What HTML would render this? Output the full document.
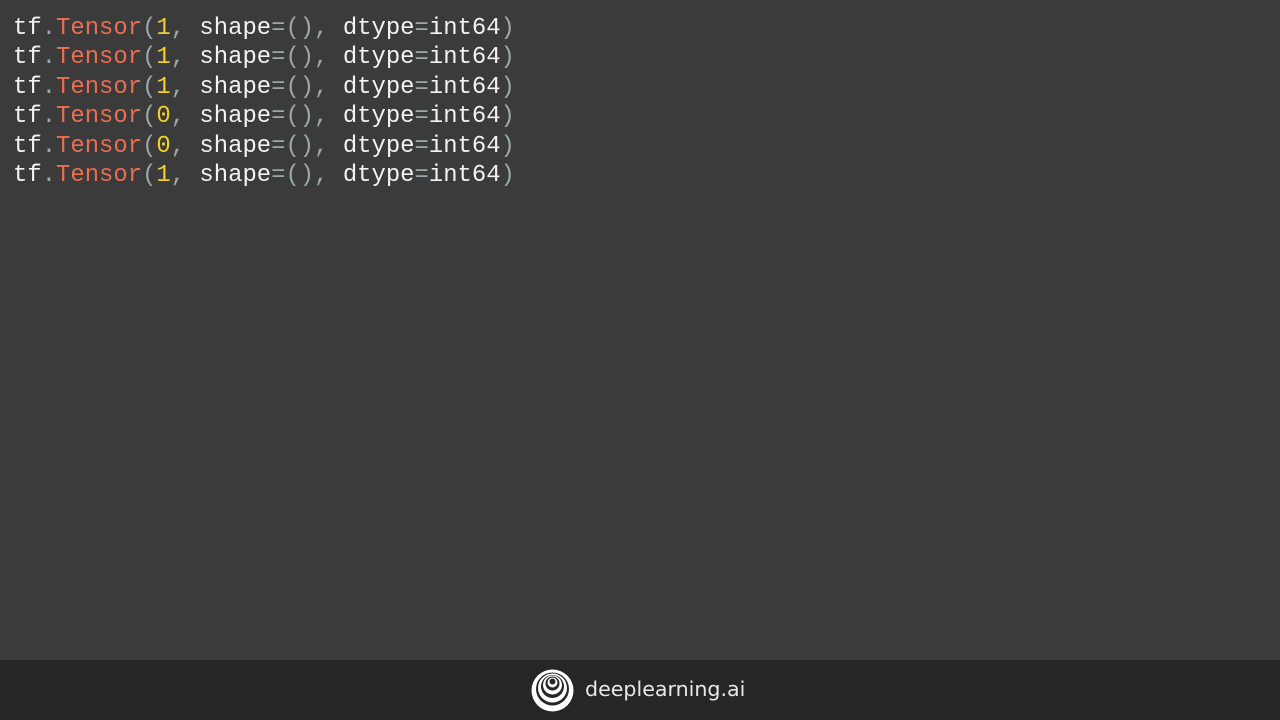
<!DOCTYPE html>
<html><head><style>
html,body{margin:0;padding:0;}
body{width:1280px;height:720px;background:#3b3b3b;position:relative;overflow:hidden;}
pre{position:absolute;left:13px;top:14px;margin:0;font-family:"Liberation Mono",monospace;font-size:23.9px;line-height:29.4px;color:#f2f2f2;}
.p{color:#9aa7ab}.c{color:#ea6e4f}.n{color:#f1cf2a}
.foot{position:absolute;left:0;top:660px;width:1280px;height:60px;background:#262626;}
.t{position:absolute;left:585px;top:677px;font-family:"DejaVu Sans","Liberation Sans",sans-serif;font-size:20.6px;color:#e8e8e8;}
</style></head><body>
<pre>tf<span class="p">.</span><span class="c">Tensor</span><span class="p">(</span><span class="n">1</span><span class="p">,</span> shape<span class="p">=(),</span> dtype<span class="p">=</span>int64<span class="p">)</span>
tf<span class="p">.</span><span class="c">Tensor</span><span class="p">(</span><span class="n">1</span><span class="p">,</span> shape<span class="p">=(),</span> dtype<span class="p">=</span>int64<span class="p">)</span>
tf<span class="p">.</span><span class="c">Tensor</span><span class="p">(</span><span class="n">1</span><span class="p">,</span> shape<span class="p">=(),</span> dtype<span class="p">=</span>int64<span class="p">)</span>
tf<span class="p">.</span><span class="c">Tensor</span><span class="p">(</span><span class="n">0</span><span class="p">,</span> shape<span class="p">=(),</span> dtype<span class="p">=</span>int64<span class="p">)</span>
tf<span class="p">.</span><span class="c">Tensor</span><span class="p">(</span><span class="n">0</span><span class="p">,</span> shape<span class="p">=(),</span> dtype<span class="p">=</span>int64<span class="p">)</span>
tf<span class="p">.</span><span class="c">Tensor</span><span class="p">(</span><span class="n">1</span><span class="p">,</span> shape<span class="p">=(),</span> dtype<span class="p">=</span>int64<span class="p">)</span></pre>
<div class="foot"></div>
<svg style="position:absolute;left:531px;top:669px" width="43" height="43" viewBox="0 0 43 43">
<circle cx="21.5" cy="21.5" r="21" fill="#fff"/>
<circle cx="21.5" cy="20" r="16.5" fill="#262626"/>
<circle cx="21.5" cy="19" r="14.5" fill="#fff"/>
<circle cx="21.5" cy="17.5" r="11.5" fill="#262626"/>
<circle cx="21.5" cy="16" r="9.5" fill="#fff"/>
<circle cx="21.5" cy="14.5" r="7" fill="#262626"/>
<circle cx="21.5" cy="13.5" r="5" fill="#fff"/>
<circle cx="21.5" cy="12.5" r="3" fill="#262626"/>
</svg>
<div class="t">deeplearning.ai</div>
</body></html>
